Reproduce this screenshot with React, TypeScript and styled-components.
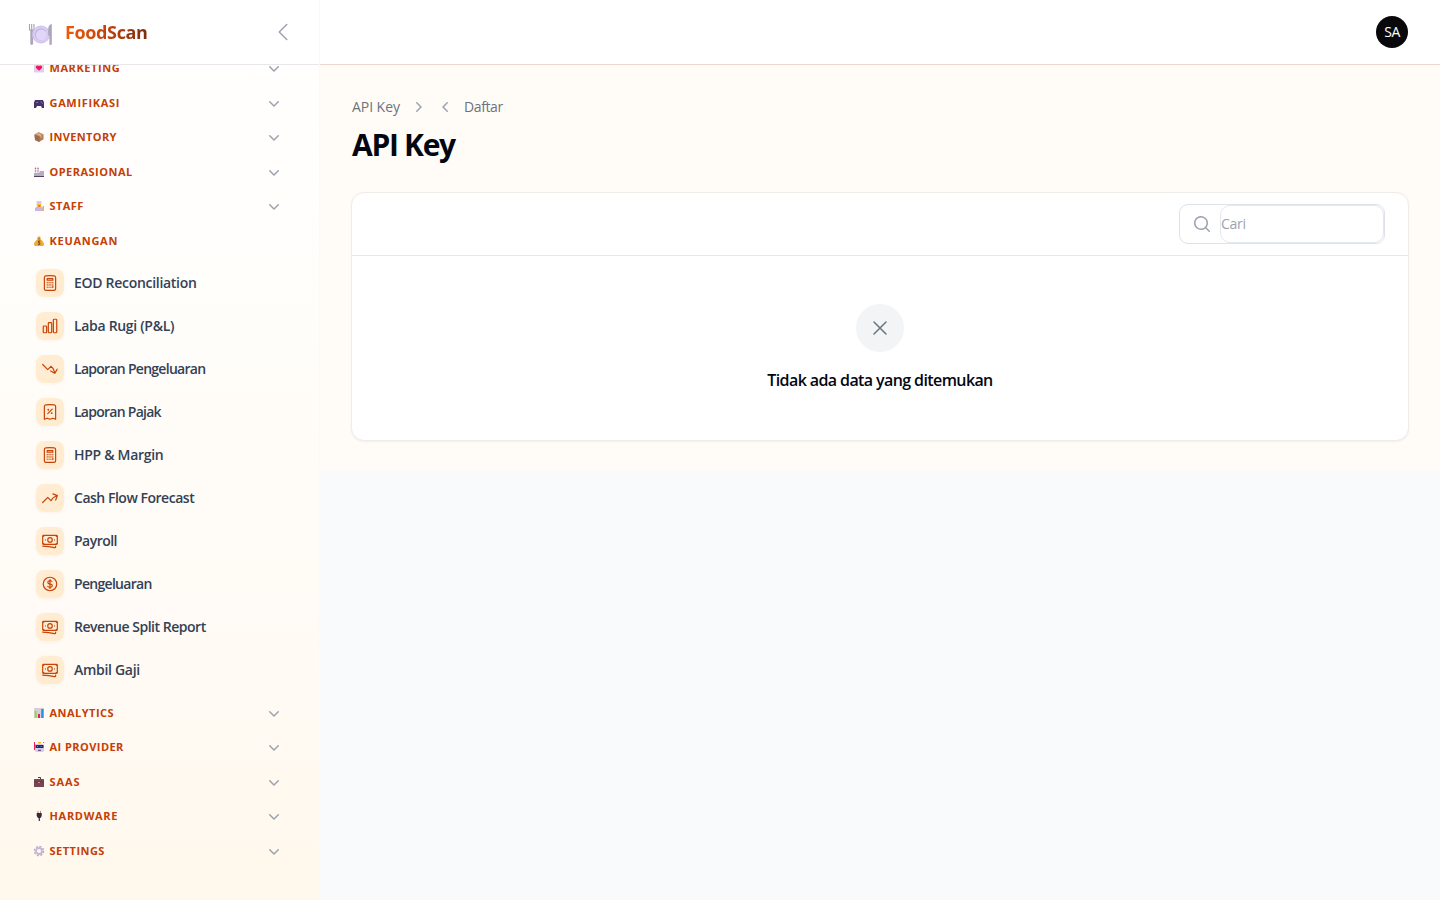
import React from "react";
import styled, { createGlobalStyle } from "styled-components";
import {
  HiMiniChevronDown,
  HiMiniChevronLeft,
  HiMiniChevronRight,
  HiMiniMagnifyingGlass,
  HiOutlineArrowTrendingDown,
  HiOutlineArrowTrendingUp,
  HiOutlineBanknotes,
  HiOutlineCalculator,
  HiOutlineChartBar,
  HiOutlineChevronLeft,
  HiOutlineCurrencyDollar,
  HiOutlineReceiptPercent,
  HiOutlineXMark,
} from "react-icons/hi2";

const GlobalStyle = createGlobalStyle`
  * { box-sizing: border-box; }
  body {
    margin: 0;
    height: 900px;
    overflow: hidden;
    background: #f9fafb;
    font-family: "Open Sans", "Noto Sans", sans-serif;
    color: #030712;
  }
`;

const Shell = styled.div`
  display: flex;
  height: 900px;
`;

const Sidebar = styled.aside`
  width: 320px;
  flex: none;
  display: flex;
  flex-direction: column;
  overflow: hidden;
  border-right: 1px solid #fef9f1;
  background: linear-gradient(180deg, #ffffff 0%, #fffdf9 40%, #fffaf4 76%, #fff8ec 100%);
`;

const SidebarHeader = styled.header`
  position: relative;
  z-index: 1;
  flex: none;
  display: flex;
  align-items: center;
  height: 65px;
  padding: 0 24px 0 28px;
  background: #fff;
  border-bottom: 1px solid #e8e8ea;
`;

const Brand = styled.div`
  display: flex;
  align-items: center;
  gap: 12px;
  flex: 1;

  svg {
    margin-top: 5px;
  }
`;

const BrandName = styled.span`
  font-size: 18px;
  line-height: 28px;
  font-weight: 700;
  letter-spacing: -0.36px;
  background: linear-gradient(90deg, #f55a05, #c2410c 50%, #7c2d12);
  background-clip: text;
  -webkit-background-clip: text;
  color: transparent;
`;

const CollapseIcon = styled(HiOutlineChevronLeft)`
  width: 24px;
  height: 24px;
  color: #9ca3af;
`;

const Nav = styled.nav`
  margin-top: -14px;
  padding: 0 36px 0 33px;
`;

const GroupRow = styled.div`
  display: flex;
  align-items: center;
  height: 34.55px;
`;

const GroupLabel = styled.span<{ $spacing: number }>`
  flex: 1;
  margin-left: 4.5px;
  font-size: 11px;
  line-height: 20px;
  font-weight: 700;
  letter-spacing: ${(p) => p.$spacing}px;
  white-space: nowrap;
  color: #c54005;
`;

const GroupChevron = styled(HiMiniChevronDown)`
  width: 20px;
  height: 20px;
  margin-right: -1px;
  color: #9ca3af;
`;

const ItemList = styled.ul`
  list-style: none;
  margin: 0;
  padding: 3.5px 0 3.5px 3px;
`;

const Item = styled.li`
  display: flex;
  align-items: center;
  gap: 10px;
  height: 43px;
`;

const ItemIcon = styled.span`
  display: grid;
  place-items: center;
  width: 28px;
  height: 28px;
  border-radius: 8px;
  background: linear-gradient(135deg, #ffedd5, #ffeccf);
  box-shadow: 0 1px 3px rgba(234, 88, 12, 0.06);
  color: #c84308;

  svg {
    width: 18px;
    height: 18px;
    stroke-width: 1.6;
  }
`;

const ItemLabel = styled.span<{ $spacing: number }>`
  font-size: 14px;
  line-height: 20px;
  font-weight: 600;
  letter-spacing: ${(p) => p.$spacing}px;
  color: #334155;
`;

const Content = styled.div`
  flex: 1;
  min-width: 0;
`;

const Topbar = styled.header`
  display: flex;
  align-items: center;
  justify-content: flex-end;
  height: 65px;
  padding: 0 32px;
  background: #fff;
  border-bottom: 1px solid #ead9cf;
  box-shadow: 0 1px 1px rgba(194, 65, 12, 0.05);
`;

const Avatar = styled.div`
  display: grid;
  place-items: center;
  width: 32px;
  height: 32px;
  padding-bottom: 1px;
  border-radius: 50%;
  background: #09090b;
  color: #fff;
  font-size: 14px;
  font-weight: 400;
  letter-spacing: -0.5px;
`;

const Page = styled.main`
  height: 406px;
  padding: 32px 31px 0;
  background: #fffcf7;
`;

const Breadcrumbs = styled.div`
  display: flex;
  align-items: center;
  height: 20px;
  padding-left: 1px;
  font-size: 14px;
  line-height: 20px;
  font-weight: 500;
  color: #6b7280;

  svg {
    width: 20px;
    height: 20px;
    color: #9ca3af;
  }
`;

const Crumb = styled.span<{ $width: number; $spacing: number }>`
  width: ${(p) => p.$width}px;
  margin-top: -1px;
  letter-spacing: ${(p) => p.$spacing}px;
  white-space: nowrap;
`;

const CrumbSeparator = styled.span`
  display: flex;
  gap: 8px;
  margin: 0 8px;
`;

const Title = styled.h1`
  margin: 10px 0 0 1px;
  font-size: 30px;
  line-height: 36px;
  font-weight: 700;
  letter-spacing: -1.3px;
`;

const Card = styled.section`
  height: 249px;
  margin-top: 29px;
  border: 1px solid #f0ece7;
  border-radius: 13px;
  background: #fff;
  box-shadow: 0 1px 2px rgba(0, 0, 0, 0.05);
`;

const CardToolbar = styled.div`
  display: flex;
  justify-content: flex-end;
  align-items: center;
  height: 63px;
  padding-right: 23px;
  border-bottom: 1px solid #e5e7eb;
`;

const Search = styled.label`
  display: flex;
  align-items: center;
  width: 206px;
  height: 40px;
  border: 1px solid #dfe3e8;
  border-radius: 9px;

  svg {
    width: 20px;
    height: 20px;
    margin: 0 8px 0 12px;
    color: #9ca3af;
  }
`;

const SearchInput = styled.input`
  flex: 1;
  min-width: 0;
  height: 38px;
  padding: 0 0 1px;
  border: 1px solid #e2e8f0;
  border-radius: 10px;
  background: #fff;
  outline: none;
  font: 400 14px "Open Sans", sans-serif;
  letter-spacing: -0.3px;

  &::placeholder {
    color: #9ca3af;
    opacity: 1;
  }
`;

const Empty = styled.div`
  display: flex;
  flex-direction: column;
  align-items: center;
  padding-top: 48px;
`;

const EmptyBadge = styled.div`
  display: grid;
  place-items: center;
  width: 48px;
  height: 48px;
  border-radius: 50%;
  background: #f3f4f6;
  color: #6b7280;

  svg {
    width: 24px;
    height: 24px;
  }
`;

const EmptyText = styled.h4`
  margin: 16px 0 0;
  font-size: 16px;
  line-height: 24px;
  font-weight: 600;
  letter-spacing: -0.6px;
`;

const Emoji = styled.svg`
  flex: none;
  width: 12px;
  height: 12px;
`;

const PlateLogo = () => (
  <svg width="25" height="24" viewBox="0 0 25 24">
    <path
      d="M1.500 1v6h4.500V1M3.700 1v6"
      fill="none"
      stroke="#a9a0b8"
      strokeWidth="1.100"
    />
    <path d="M3.700 8v12.500" stroke="#aea5bd" strokeWidth="2.800" strokeLinecap="round" />
    <circle cx="13" cy="11.500" r="9" fill="#cdbfe8" />
    <circle cx="13" cy="11.500" r="8" fill="#dacff2" />
    <circle cx="13" cy="11.500" r="6.200" fill="#c4b4e3" />
    <circle cx="13.400" cy="12" r="5.500" fill="#e0d6f7" />
    <path d="M23.800 1q-3.300.5-3.600 5v6l1.200 1v8.500q1.200.8 2.400 0z" fill="#aea5bd" />
  </svg>
);

const emojis: Record<string, React.ReactNode> = {
  love: (
    <>
      <rect x="1" y="2" width="10" height="8.500" rx=".7" fill="#ddd0ef" />
      <path d="M6 8.800 3 6C2.300 3.300 5 2.800 6 4.100 7 2.800 9.700 3.300 9 6z" fill="#f5125d" />
    </>
  ),
  game: (
    <>
      <path d="M2 3h8l1 2.500V11H9L8 9H4L3 11H1V5.500z" fill="#443269" />
      <path d="M3 5.500h2" stroke="#8371b3" />
      <circle cx="8.300" cy="5" r=".7" fill="#4a9de8" />
      <circle cx="9.500" cy="6.500" r=".6" fill="#e84670" />
    </>
  ),
  box: (
    <>
      <path d="m1.500 3.500 4-2.300 5 2v5L6 11 2 9z" fill="#b27c5b" />
      <path d="m1.500 3.500 4-2.300 5 2L6.500 5.500z" fill="#cd9a75" />
      <path d="M6.500 5.500V11L2 9 1.500 3.500z" fill="#9e6b4f" />
      <path d="m4 2.500 4 2v2" stroke="#e4bd98" fill="none" />
    </>
  ),
  factory: (
    <>
      <path d="M1 7h5l1-2h4v6H1z" fill="#b6adc4" />
      <path d="M2.500 1v6M5 1v6" stroke="#d8c9df" strokeWidth="1.300" />
      <path d="M2.500 2v1M5 2v1M2.500 4.500v1M5 4.500v1" stroke="#d45078" strokeWidth="1.200" />
      <path d="M1 10.500h10" stroke="#55415f" />
    </>
  ),
  cook: (
    <>
      <path d="M2 11V8l2-1.500h4L10 8v3z" fill="#c7b7e3" />
      <circle cx="6" cy="5" r="2.400" fill="#ffc332" />
      <path d="M3.500 1h5v2.700h-5z" fill="#d7caea" />
      <path d="M5 6h2.500" stroke="#d13a3a" />
      <path d="M10.200 6v5" stroke="#f6a821" strokeWidth="1.300" />
    </>
  ),
  money: (
    <>
      <path d="M4.500 1.500h3L7 4q4 2.500 4 5.500 0 1.500-2 1.500H3q-2 0-2-1.500Q1 6.500 5 4z" fill="#efab2d" />
      <path d="M4.500 3.800h3" stroke="#a86624" />
      <path d="M7.300 6H5.500v1.700h1.300v1.600H5" stroke="#71452b" fill="none" />
    </>
  ),
  chart: (
    <>
      <rect x="1" y="1" width="10" height="10" rx=".5" fill="#d5ceda" />
      <path d="M2.700 4v7" stroke="#8edb45" strokeWidth="2" />
      <path d="M6 7v4" stroke="#e51e62" strokeWidth="2" />
      <path d="M9.400 2v9" stroke="#268de0" strokeWidth="2.300" />
    </>
  ),
  robot: (
    <>
      <path d="M2 3h8l1 2v5l-1 1H3L1.500 9z" fill="#d8cbe9" />
      <path d="M2.500 4h8v3h-8z" fill="#30294e" />
      <path d="M5 1.800h3" stroke="#f8b31e" strokeWidth="1.500" />
      <path d="M1.500 1v8" stroke="#e92061" />
      <path d="M4 5.500h1.200M7.500 5.500h1.200" stroke="#3599ed" />
      <path d="M5 9.300h3" stroke="#493b67" />
      <circle cx="10.700" cy="1.500" r=".6" fill="#e92061" />
    </>
  ),
  briefcase: (
    <>
      <path d="M5 1.500h2.500V3" stroke="#543540" fill="none" />
      <rect x="1" y="3" width="10" height="8" rx=".6" fill="#754653" />
      <path d="M1 6h10" stroke="#5a3641" strokeWidth=".7" />
      <path d="M5 6.500h2" stroke="#dd8d73" />
    </>
  ),
  plug: (
    <>
      <path d="M5 1v3M7.500 1v3" stroke="#b98a67" />
      <path d="M3.700 3h5v3L7.500 8H5L3.700 6z" fill="#342842" />
      <path d="M6.300 7v4" stroke="#342842" strokeWidth="1.200" />
    </>
  ),
  gear: (
    <>
      <circle cx="6" cy="6" r="4.600" fill="none" stroke="#b5a8cc" strokeWidth="1.300" strokeDasharray="2 1.600" />
      <circle cx="6" cy="6" r="3" fill="none" stroke="#c3b7d8" strokeWidth="1.900" />
    </>
  ),
};

type GroupProps = { emoji: string; label: string; spacing: number; open?: boolean };

const Group = ({ emoji, label, spacing, open }: GroupProps) => (
  <GroupRow>
    <Emoji viewBox="0 0 12 12">{emojis[emoji]}</Emoji>
    <GroupLabel $spacing={spacing}>{label}</GroupLabel>
    {!open && <GroupChevron />}
  </GroupRow>
);

const groupsBefore: GroupProps[] = [
  { emoji: "love", label: "MARKETING", spacing: 0.58 },
  { emoji: "game", label: "GAMIFIKASI", spacing: 0.66 },
  { emoji: "box", label: "INVENTORY", spacing: 0.35 },
  { emoji: "factory", label: "OPERASIONAL", spacing: 0.48 },
  { emoji: "cook", label: "STAFF", spacing: 0.45 },
  { emoji: "money", label: "KEUANGAN", spacing: 0.72, open: true },
];

const groupsAfter: GroupProps[] = [
  { emoji: "chart", label: "ANALYTICS", spacing: 0.48 },
  { emoji: "robot", label: "AI PROVIDER", spacing: 0.45 },
  { emoji: "briefcase", label: "SAAS", spacing: 0.9 },
  { emoji: "plug", label: "HARDWARE", spacing: 0.7 },
  { emoji: "gear", label: "SETTINGS", spacing: 0.48 },
];

const items = [
  { icon: HiOutlineCalculator, label: "EOD Reconciliation", spacing: -0.29 },
  { icon: HiOutlineChartBar, label: "Laba Rugi (P&L)", spacing: -0.31 },
  { icon: HiOutlineArrowTrendingDown, label: "Laporan Pengeluaran", spacing: -0.72 },
  { icon: HiOutlineReceiptPercent, label: "Laporan Pajak", spacing: -0.74 },
  { icon: HiOutlineCalculator, label: "HPP & Margin", spacing: -0.3 },
  { icon: HiOutlineArrowTrendingUp, label: "Cash Flow Forecast", spacing: -0.48 },
  { icon: HiOutlineBanknotes, label: "Payroll", spacing: -0.52 },
  { icon: HiOutlineCurrencyDollar, label: "Pengeluaran", spacing: -0.7 },
  { icon: HiOutlineBanknotes, label: "Revenue Split Report", spacing: -0.48 },
  { icon: HiOutlineBanknotes, label: "Ambil Gaji", spacing: -0.3 },
];

export default function App() {
  return (
    <>
      <GlobalStyle />
      <Shell>
        <Sidebar>
          <SidebarHeader>
            <Brand>
              <PlateLogo />
              <BrandName>FoodScan</BrandName>
            </Brand>
            <CollapseIcon />
          </SidebarHeader>
          <Nav>
            {groupsBefore.map((g) => (
              <Group key={g.label} {...g} />
            ))}
            <ItemList>
              {items.map(({ icon: Icon, label, spacing }) => (
                <Item key={label}>
                  <ItemIcon>
                    <Icon />
                  </ItemIcon>
                  <ItemLabel $spacing={spacing}>{label}</ItemLabel>
                </Item>
              ))}
            </ItemList>
            {groupsAfter.map((g) => (
              <Group key={g.label} {...g} />
            ))}
          </Nav>
        </Sidebar>
        <Content>
          <Topbar>
            <Avatar>SA</Avatar>
          </Topbar>
          <Page>
            <Breadcrumbs>
              <Crumb $width={48} $spacing={-0.05}>API Key</Crumb>
              <CrumbSeparator>
                <HiMiniChevronRight />
                <HiMiniChevronLeft />
              </CrumbSeparator>
              <Crumb $width={40} $spacing={-0.4}>Daftar</Crumb>
            </Breadcrumbs>
            <Title>API Key</Title>
            <Card>
              <CardToolbar>
                <Search>
                  <HiMiniMagnifyingGlass />
                  <SearchInput placeholder="Cari" />
                </Search>
              </CardToolbar>
              <Empty>
                <EmptyBadge>
                  <HiOutlineXMark />
                </EmptyBadge>
                <EmptyText>Tidak ada data yang ditemukan</EmptyText>
              </Empty>
            </Card>
          </Page>
        </Content>
      </Shell>
    </>
  );
}
